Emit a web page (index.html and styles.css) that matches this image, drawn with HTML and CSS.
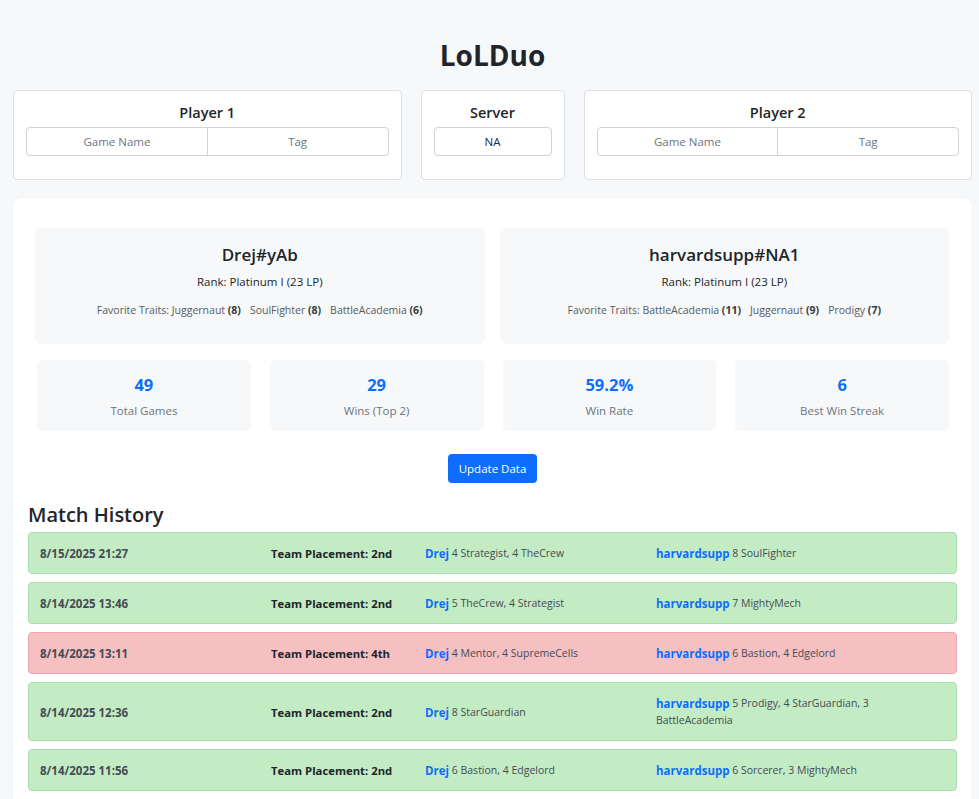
FILE: index.html
```html
<!DOCTYPE html>
<html lang="en">
<head>
<meta charset="utf-8">
<title>LoLDuo</title>
<link rel="stylesheet" href="styles.css">
</head>
<body>
<div class="page">
  <h1 class="title">LoLDuo</h1>

  <div class="inputs">
    <div class="in-card">
      <div class="in-title">Player 1</div>
      <div class="in-group">
        <div class="in-field ph">Game Name</div>
        <div class="in-field ph">Tag</div>
      </div>
    </div>
    <div class="in-card server">
      <div class="in-title">Server</div>
      <div class="in-group">
        <div class="in-field val">NA</div>
      </div>
    </div>
    <div class="in-card">
      <div class="in-title">Player 2</div>
      <div class="in-group">
        <div class="in-field ph">Game Name</div>
        <div class="in-field ph">Tag</div>
      </div>
    </div>
  </div>

  <div class="main">
    <div class="players">
      <div class="player">
        <div class="p-name">Drej#yAb</div>
        <div class="p-rank">Rank: Platinum I (23 LP)</div>
        <div class="p-traits">Favorite Traits: <span class="t">Juggernaut <b>(8)</b></span><span class="t">SoulFighter <b>(8)</b></span><span class="t">BattleAcademia <b>(6)</b></span></div>
      </div>
      <div class="player">
        <div class="p-name">harvardsupp#NA1</div>
        <div class="p-rank">Rank: Platinum I (23 LP)</div>
        <div class="p-traits">Favorite Traits: <span class="t">BattleAcademia <b>(11)</b></span><span class="t">Juggernaut <b>(9)</b></span><span class="t">Prodigy <b>(7)</b></span></div>
      </div>
    </div>

    <div class="stats">
      <div class="stat"><div class="s-num">49</div><div class="s-label">Total Games</div></div>
      <div class="stat"><div class="s-num">29</div><div class="s-label">Wins (Top 2)</div></div>
      <div class="stat"><div class="s-num">59.2%</div><div class="s-label">Win Rate</div></div>
      <div class="stat"><div class="s-num">6</div><div class="s-label">Best Win Streak</div></div>
    </div>

    <div class="btn-row"><button class="btn">Update Data</button></div>

    <h2 class="mh">Match History</h2>

    <div class="matches">
      <div class="match win">
        <div class="m-date">8/15/2025 21:27</div>
        <div class="m-place">Team Placement: 2nd</div>
        <div class="m-comp"><span class="who">Drej</span> 4 Strategist, 4 TheCrew</div>
        <div class="m-comp"><span class="who">harvardsupp</span> 8 SoulFighter</div>
      </div>
      <div class="match win">
        <div class="m-date">8/14/2025 13:46</div>
        <div class="m-place">Team Placement: 2nd</div>
        <div class="m-comp"><span class="who">Drej</span> 5 TheCrew, 4 Strategist</div>
        <div class="m-comp"><span class="who">harvardsupp</span> 7 MightyMech</div>
      </div>
      <div class="match loss">
        <div class="m-date">8/14/2025 13:11</div>
        <div class="m-place">Team Placement: 4th</div>
        <div class="m-comp"><span class="who">Drej</span> 4 Mentor, 4 SupremeCells</div>
        <div class="m-comp"><span class="who">harvardsupp</span> 6 Bastion, 4 Edgelord</div>
      </div>
      <div class="match win">
        <div class="m-date">8/14/2025 12:36</div>
        <div class="m-place">Team Placement: 2nd</div>
        <div class="m-comp"><span class="who">Drej</span> 8 StarGuardian</div>
        <div class="m-comp"><span class="who">harvardsupp</span> 5 Prodigy, 4 StarGuardian, 3 BattleAcademia</div>
      </div>
      <div class="match win">
        <div class="m-date">8/14/2025 11:56</div>
        <div class="m-place">Team Placement: 2nd</div>
        <div class="m-comp"><span class="who">Drej</span> 6 Bastion, 4 Edgelord</div>
        <div class="m-comp"><span class="who">harvardsupp</span> 6 Sorcerer, 3 MightyMech</div>
      </div>
    </div>
  </div>
</div>
</body>
</html>
```

FILE: styles.css
```css
* { box-sizing: border-box; }
html, body { margin: 0; padding: 0; }
body {
  background: #f7f8fa;
  font-family: "Open Sans", "Noto Sans", sans-serif;
  color: #212529;
  height: 799px;
  overflow: hidden;
}
.page {
  padding: 36px 7px 0 13px;
}
.title {
  margin: 0 0 16px;
  text-align: center;
  font-size: 28px;
  line-height: 38px;
  font-weight: 700;
  color: #212529;
}
.inputs {
  display: flex;
  gap: 19px;
}
.in-card {
  flex: 1;
  height: 90px;
  background: #fff;
  border: 1px solid #dcdfe3;
  border-radius: 4px;
  padding: 10px 12px 0;
}
.in-card.server { flex: 0 0 144px; }
.in-title {
  text-align: center;
  font-size: 14.5px;
  font-weight: 600;
  line-height: 24px;
  margin-bottom: 2px;
}
.in-group {
  display: flex;
  height: 29px;
  border: 1px solid #ced4da;
  border-radius: 4px;
  background: #fff;
}
.in-field {
  flex: 1;
  display: flex;
  align-items: center;
  justify-content: center;
  font-size: 11.5px;
}
.in-field + .in-field { border-left: 1px solid #ced4da; }
.in-field.ph { color: #6c757d; }
.in-field.val { color: #1d2b48; }

.main {
  margin-top: 18px;
  background: #fff;
  border-radius: 8px;
  padding: 30px 15px 30px;
  box-shadow: 0 0 3px rgba(0,0,0,0.05);
}
.players {
  display: grid;
  grid-template-columns: 1fr 1fr;
  gap: 15px;
  margin: 0 8px 0 7px;
}
.player {
  background: #f7f8fa;
  border-radius: 6px;
  height: 116px;
  padding-top: 14px;
  text-align: center;
}
.p-name {
  font-size: 17px;
  font-weight: 600;
  line-height: 26px;
}
.p-rank {
  font-size: 11.5px;
  line-height: 18px;
  margin-top: 5px;
}
.p-traits {
  font-size: 10.5px;
  line-height: 16px;
  margin-top: 11px;
  color: #555b61;
}
.p-traits .t + .t { margin-left: 9px; }
.p-traits b { color: #343a40; font-weight: 700; }

.stats {
  display: grid;
  grid-template-columns: repeat(4, 1fr);
  gap: 19px;
  margin: 16px 8px 0 9px;
}
.stat {
  background: #f7f8fa;
  border-radius: 5px;
  height: 71px;
  text-align: center;
  padding-top: 13px;
}
.s-num {
  font-size: 16.5px;
  font-weight: 700;
  color: #0d6efd;
  line-height: 24px;
}
.s-label {
  font-size: 11.5px;
  color: #6c757d;
  line-height: 18px;
  margin-top: 5px;
}
.btn-row {
  display: flex;
  justify-content: center;
  margin-top: 23px;
}
.btn {
  background: #0d6efd;
  color: #fff;
  border: none;
  border-radius: 4px;
  height: 29px;
  padding: 0 11px;
  font-family: inherit;
  font-size: 11.5px;
}
.mh {
  margin: 17px 0 0;
  font-size: 20px;
  font-weight: 600;
  line-height: 30px;
}
.matches {
  margin-top: 2px;
  display: flex;
  flex-direction: column;
  gap: 8px;
}
.match {
  display: grid;
  grid-template-columns: 231px 154px 231px 231px;
  align-items: center;
  padding: 12px 11px 11px;
  border-radius: 4px;
  border: 1px solid;
  line-height: 17px;
}
.match.win { background: #c3ecc5; border-color: #acdcb0; }
.match.loss { background: #f6c0c2; border-color: #eda6ab; }
.m-date {
  font-size: 11.5px;
  font-weight: 700;
  color: #454b51;
  line-height: 17px;
}
.m-place {
  font-size: 11.3px;
  font-weight: 700;
  color: #212529;
  line-height: 17px;
}
.m-comp {
  font-size: 10.5px;
  line-height: 17px;
  color: #454b51;
}
.who {
  color: #0d6efd;
  font-weight: 700;
  font-size: 11.5px;
  line-height: 17px;
  vertical-align: top;
}
```
